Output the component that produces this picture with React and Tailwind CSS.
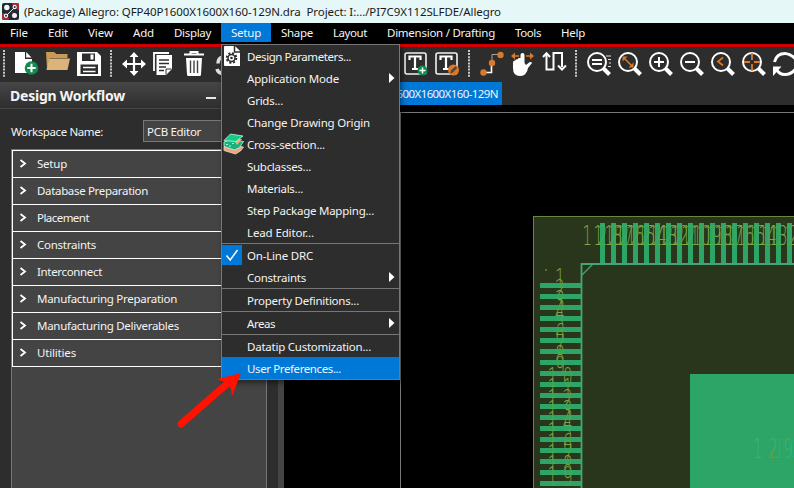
import { useLayoutEffect, useRef } from "react";

// Text set to an exact width by spreading the spacing between its letters.
function Fit({ w, children, className = "" }) {
  const ref = useRef(null);
  useLayoutEffect(() => {
    const el = ref.current;
    el.style.letterSpacing = "0px";
    const natural = el.getBoundingClientRect().width;
    el.style.letterSpacing = `${(w - natural) / children.length}px`;
  }, [w, children]);
  return (
    <span className="block shrink-0" style={{ width: w }}>
      <span ref={ref} className={`inline-block whitespace-pre ${className}`}>
        {children}
      </span>
    </span>
  );
}

const MENUS = [
  ["File", 18], ["Edit", 20], ["View", 25], ["Add", 21], ["Display", 37], ["Setup", 30],
  ["Shape", 32], ["Layout", 34], ["Dimension / Drafting", 108], ["Tools", 26], ["Help", 24],
];

const WORKFLOW = [
  ["Setup", 30], ["Database Preparation", 111], ["Placement", 52], ["Constraints", 59],
  ["Interconnect", 65], ["Manufacturing Preparation", 140], ["Manufacturing Deliverables", 142],
  ["Utilities", 39],
];

const SETUP_MENU = [
  { label: "Design Parameters...", w: 104, icon: "params" },
  { label: "Application Mode", w: 92, sub: true },
  { label: "Grids...", w: 36 },
  { label: "Change Drawing Origin", w: 123 },
  { label: "Cross-section...", w: 78, icon: "layers" },
  { label: "Subclasses...", w: 64 },
  { label: "Materials...", w: 56 },
  { label: "Step Package Mapping...", w: 127 },
  { label: "Lead Editor...", w: 67 },
  null,
  { label: "On-Line DRC", w: 66, icon: "check" },
  { label: "Constraints", w: 59, sub: true },
  null,
  { label: "Property Definitions...", w: 112 },
  null,
  { label: "Areas", w: 28, sub: true },
  null,
  { label: "Datatip Customization...", w: 124 },
  { label: "User Preferences...", w: 94, active: true },
];

function Logo() {
  return (
    <svg width="17" height="17" viewBox="0 0 17 17" className="shrink-0">
      <rect width="17" height="17" rx="2" fill="#202a35" />
      <path d="M10 1h6v6M1 10v6h6M10.500 9.500l2 2" stroke="#d9232e" strokeWidth="1.5" fill="none" />
      <path d="M5 12L12 5" stroke="#e9e9e9" strokeWidth="1" />
      <g fill="#f5f5f5">
        <circle cx="4.8" cy="4.5" r="2.7" />
        <circle cx="12.5" cy="12.5" r="2.5" />
      </g>
      <g fill="#202a35" stroke="#f5f5f5" strokeWidth="1.2">
        <circle cx="12.7" cy="4" r="1.600" />
        <circle cx="4" cy="12.8" r="1.600" />
      </g>
    </svg>
  );
}

// Toolbar cell; its drawing uses the window's own coordinates.
function Cell({ x, to, children }) {
  return (
    <svg className="shrink-0" width={to - x} height="35" viewBox={`${x} 47 ${to - x} 35`}>
      {children}
    </svg>
  );
}

function Grip({ x }) {
  return <path d={`M${x} 50v27`} stroke="#c8c8c8" strokeWidth="2" strokeDasharray="2 1.1" />;
}

function Lens({ cx, children }) {
  return (
    <g fill="none" stroke="#fff" strokeWidth="2">
      <circle cx={cx} cy="62" r="9" />
      <path d={`M${cx + 6.5} 68.500l6 6`} strokeWidth="4" />
      {children}
    </g>
  );
}

function TextBox({ x, children }) {
  return (
    <g>
      <rect x={x} y="53" width="21" height="21" rx="2" fill="none" stroke="#f2f2f2" strokeWidth="1.6" />
      <path d={`M${x + 4.5} 60v-3.5h11v3.5M${x + 10} 56.5v12.5M${x + 7} 69h6`} fill="none" stroke="#fff" strokeWidth="2.2" />
      {children}
    </g>
  );
}

function Toolbar() {
  return (
    <div className="flex h-[35px] w-[794px] shrink-0 overflow-hidden bg-[#2d2d2d]">
      <Cell x={0} to={10}><Grip x={4} /></Cell>
      <Cell x={10} to={42}>
        <path d="M15 52h10v7h7v14H15z" fill="#fff" />
        <path d="M26.2 52l5.3 5.6h-5.3z" fill="#fff" />
        <circle cx="31.5" cy="68" r="6.8" fill="#128a4e" />
        <path d="M31.5 63.8v8.4M27.3 68h8.4" stroke="#fff" strokeWidth="2" />
      </Cell>
      <Cell x={42} to={74}>
        <path d="M46 52h8l2.500 2h11v4H49.500L47 69z" fill="#c99955" />
        <path d="M49 58.500h21l-2.500 11.500H46.500z" fill="#dcb47a" />
      </Cell>
      <Cell x={74} to={106}>
        <path d="M77 52h20l4 4v20H77z" fill="#fff" />
        <rect x="82" y="53.500" width="13" height="7.500" fill="#2d2d2d" />
        <rect x="90.500" y="54.500" width="3" height="5" fill="#fff" />
        <rect x="80.500" y="64.500" width="17.500" height="9.500" fill="#2d2d2d" />
        <path d="M83 67.500h12.500M83 71.500h12.500" stroke="#fff" strokeWidth="1.600" />
      </Cell>
      <Cell x={106} to={118}><Grip x={111} /></Cell>
      <Cell x={118} to={149}>
        <path d="M134 55v18M125 64h18" stroke="#fff" strokeWidth="2.200" />
        <path d="M134 52l4.500 5h-9zM134 76l4.500-5h-9zM122 64l5-4.500v9zM146 64l-5-4.500v9z" fill="#fff" />
      </Cell>
      <Cell x={149} to={180}>
        <path d="M154 71V53h15" fill="none" stroke="#fff" strokeWidth="1.800" />
        <path d="M156.500 55h15.500v14l-6 6h-9.500z" fill="#fff" />
        <path d="M159 60h10M159 63.500h10M159 67h7M159 70.500h5" stroke="#2d2d2d" strokeWidth="1.400" />
        <path d="M166 74.500V69h5.500" stroke="#2d2d2d" fill="none" />
      </Cell>
      <Cell x={180} to={211}>
        <path d="M184 54.500h20M190.500 54v-2h7v2" fill="none" stroke="#fff" strokeWidth="2" />
        <path d="M186 58h16l-1 16.500q0 1.500-1.500 1.500h-11q-1.500 0-1.500-1.500z" fill="#fff" />
        <path d="M190.500 60.500v12.500M194 60.500v12.500M197.500 60.500v12.500" stroke="#444" strokeWidth="1.400" />
      </Cell>
      <Cell x={211} to={400}>
        <path d="M223 57q-5 1-5 6.500M217 69q1 4 7 5" fill="none" stroke="#e2e2e2" strokeWidth="3.500" />
      </Cell>
      <Cell x={400} to={431}>
        <TextBox x={405}>
          <circle cx="422.500" cy="70.500" r="5" fill="#128a4e" />
          <path d="M422.500 67.500v6M419.500 70.500h6" stroke="#fff" strokeWidth="1.500" />
        </TextBox>
      </Cell>
      <Cell x={431} to={464}>
        <TextBox x={436}>
          <circle cx="453.500" cy="70" r="5.500" fill="#d9792a" />
          <path d="M450 73.500l1-3 4.500-4.200 1.700 1.700-4.200 4.500z" fill="#5a4634" />
        </TextBox>
      </Cell>
      <Cell x={464} to={474}><Grip x={469} /></Cell>
      <Cell x={474} to={507}>
        <path d="M483 72.500h8.500V63.500" fill="none" stroke="#fff" strokeWidth="1.600" />
        <path d="M492 61v-6.500h8" fill="none" stroke="#a5a5a5" strokeWidth="1" />
        <g fill="#d9792a">
          <circle cx="483.500" cy="72.500" r="3.200" />
          <circle cx="492" cy="63" r="3.200" />
          <circle cx="500.500" cy="55" r="3.200" />
        </g>
      </Cell>
      <Cell x={507} to={538}>
        <path d="M512 56h7M526 56h7" stroke="#d9792a" strokeWidth="1.600" />
        <path d="M511 56l4-3.500v7zM534 56l-4-3.500v7z" fill="#d9792a" />
        <path d="M520.500 55q0-2 2-2t2 2v8l1.500 2 3-2.500q2.500-1 3 .5l-4 5q-.5 3-2 5-1.500 3-6 3-7 0-7-8v-5.500q0-2 2.200-2 .3-1.500 2.800-1.200v-.8q.5-.8 2.500-.5z" fill="#fff" />
      </Cell>
      <Cell x={538} to={570}>
        <path d="M546.500 55v14.500h7V53h8.500v14" fill="none" stroke="#fff" strokeWidth="2" />
        <path d="M543 57l3.500-3.800 3.500 3.800M558 65.500l4 4 4-4" fill="none" stroke="#fff" strokeWidth="2" />
      </Cell>
      <Cell x={570} to={583}><Grip x={576} /></Cell>
      <Cell x={583} to={614}>
        <path d="M606 56h5M608 59.500h3M609 63h2M608 66.500h3" stroke="#ddd" strokeWidth="1" />
        <Lens cx={597}><path d="M592 60h10M592 64h10" /></Lens>
      </Cell>
      <Cell x={614} to={645}>
        <Lens cx={628}>
          <path d="M624.500 58.500l7 7" stroke="#d9792a" strokeWidth="1.600" />
          <path d="M622.500 56.500h5l-5 5zM633.500 67.500h-5l5-5z" fill="#d9792a" stroke="none" />
        </Lens>
      </Cell>
      <Cell x={645} to={676}><Lens cx={659}><path d="M654 62h10M659 57v10" /></Lens></Cell>
      <Cell x={676} to={707}><Lens cx={690}><path d="M685 62h10" /></Lens></Cell>
      <Cell x={707} to={738}>
        <Lens cx={721}><path d="M723 57.500l-5 4 5 4" stroke="#d9792a" strokeWidth="1.700" /></Lens>
      </Cell>
      <Cell x={738} to={769}>
        <Lens cx={752}>
          <path d="M752 53v7M752 64v7M744 62h6M754 62h6" stroke="#d9792a" strokeWidth="1.800" />
        </Lens>
      </Cell>
      <Cell x={769} to={794}>
        <g fill="none" stroke="#fff" strokeWidth="3">
          <path d="M774.500 62q2-8.500 10.500-8.500 5 0 10 5" />
          <path d="M776 69q3 5.500 9 5.500 6 0 10-5" />
        </g>
        <path d="M773 66.500h8.500L773 76z" fill="#fff" />
      </Cell>
    </div>
  );
}

function MenuIcon({ kind }) {
  if (kind === "check")
    return (
      <svg width="20" height="20" viewBox="0 0 20 20" className="bg-[#0078d7]">
        <path d="M4.500 10.500l3.700 4.500L15.500 5" fill="none" stroke="#fff" strokeWidth="1.500" />
      </svg>
    );
  if (kind === "params")
    return (
      <svg width="20" height="22" viewBox="0 0 20 22">
        <path d="M3 1h10l5 5v15H3Q2 21 2 20V2Q2 1 3 1z" fill="#fff" />
        <path d="M12.500 1v6H18" fill="none" stroke="#2d2d2d" strokeWidth="1.500" />
        <circle cx="9.500" cy="13" r="4.800" fill="none" stroke="#2d2d2d" strokeWidth="2" strokeDasharray="2 1.770" />
        <circle cx="9.500" cy="13" r="3.500" fill="none" stroke="#2d2d2d" strokeWidth="1.500" />
        <circle cx="9.500" cy="13" r="1.300" fill="#2d2d2d" />
      </svg>
    );
  if (kind === "layers")
    return (
      <svg width="22" height="22" viewBox="0 0 22 22">
        <path d="M2 14l6-2 13.500 2-3 4-5 3L2 17.500z" fill="#eda57c" stroke="#e8d8c8" strokeWidth=".8" />
        <path d="M2 9l6-2 13.500 1.500-4 6-5 2.500L2 13.500z" fill="#14b47c" stroke="#d8eee4" strokeWidth=".8" />
        <path d="M13 9l4-3.500 3 .5-5 6z" fill="#f1ad82" />
        <path d="M2 7.500L8.500 1 21 3l-7 5.500z" fill="#0fcf88" stroke="#c9f0df" strokeWidth=".8" />
        <path d="M4 11.500h2m1 1.500h2m1-2.500h2" stroke="#baf0d8" />
      </svg>
    );
  return null;
}

function SetupMenu() {
  return (
    <div className="absolute left-[221px] top-[44px] flex w-[179px] flex-col border border-[#777] bg-[#2d2d2d] shadow-[2px_3px_5px_rgba(0,0,0,0.45)]">
      {SETUP_MENU.map((item, i) =>
        item === null ? (
          <div key={i} className="h-px bg-[#777]" />
        ) : (
          <div key={i} className={`flex h-[22px] items-center ${item.active ? "bg-[#0078d7]" : ""}`}>
            <div className="w-[25px] shrink-0"><MenuIcon kind={item.icon} /></div>
            <div className="pt-[2px]"><Fit w={item.w}>{item.label}</Fit></div>
            {item.sub && (
              <svg width="6" height="10" viewBox="0 0 6 10" className="ml-auto mr-[4px]">
                <path d="M0 0l5.500 5L0 10z" fill="#fff" />
              </svg>
            )}
          </div>
        )
      )}
    </div>
  );
}

function LeftPanel() {
  return (
    <div className="flex h-[406px] w-[278px] shrink-0 flex-col bg-[#2d2d2d]">
      <div className="flex h-[27px] shrink-0 items-center border-b border-[#464646] bg-linear-to-b from-[#464646] to-[#2e2e2e] pl-[10px] pt-[2px] text-[14px] font-bold">
        <Fit w={115}>Design Workflow</Fit>
        <div className="ml-[81px] mt-1 h-[2px] w-[10px] bg-[#e8e8e8]" />
      </div>
      <div className="flex h-[40px] shrink-0 items-start pl-[11px] pt-[11px]">
        <div className="flex h-[22px] w-[132px] items-center pt-[2px]"><Fit w={92}>Workspace Name:</Fit></div>
        <div className="flex h-[22px] w-[123px] items-center border border-[#777] bg-[#444] pl-[3px] pt-[2px]">
          <Fit w={54}>PCB Editor</Fit>
        </div>
      </div>
      <div className="ml-[11px] flex w-[256px] grow flex-col border border-b-0 border-[#777] bg-[#444]">
        <div className="flex flex-col border-l border-t border-white">
          {WORKFLOW.map(([label, w]) => (
            <div key={label} className="flex h-[27px] items-center border-b border-white">
              <svg width="24" height="12" viewBox="0 0 24 12">
                <path d="M7.500 2l4.500 3.500L7.500 9" fill="none" stroke="#fff" strokeWidth="1.800" />
              </svg>
              <Fit w={w}>{label}</Fit>
            </div>
          ))}
        </div>
      </div>
    </div>
  );
}

const TOP_PADS = Array.from({ length: 18 }, (_, i) => i);
const LEFT_PADS = Array.from({ length: 19 }, (_, i) => i);

// One pin number, its digits about 15 px apart around the pad's centre.
function PinNumber({ n, cx, y, fill = "#77a844" }) {
  const digits = String(n).split("");
  return digits.map((d, i) => (
    <text
      key={i}
      transform={`translate(${cx + (i - (digits.length - 1) / 2) * 15.3} ${y}) scale(0.6 1)`}
      textAnchor="middle"
      fill={fill}
      className="font-['DejaVu_Sans'] text-[26px] font-extralight"
    >
      {d}
    </text>
  ));
}

function Board() {
  return (
    <svg width="393" height="375" viewBox="401 113 393 375" className="block shrink-0">
      <rect x="533.500" y="216.500" width="300" height="300" fill="#29361b" stroke="#65893a" />
      {TOP_PADS.map((i) => (
        <rect key={i} x={600 + 11 * i} y="223" width="5" height="41" fill="#2ca567" />
      ))}
      {LEFT_PADS.map((i) => (
        <rect key={i} x="540" y={283 + 11 * i} width="41" height="5" fill="#2ca567" />
      ))}
      <g>
        {TOP_PADS.map((i) => <PinNumber key={i} n={128 - i} cx={602.5 + 11 * i} y={245} />)}
        {LEFT_PADS.map((i) => <PinNumber key={i} n={i + 1} cx={560} y={288 + 11 * i} />)}
      </g>
      <g opacity="0.55" fill="#2ca567">
        {TOP_PADS.map((i) => <rect key={i} x={600 + 11 * i} y="223" width="5" height="41" />)}
        {LEFT_PADS.map((i) => <rect key={i} x="540" y={283 + 11 * i} width="41" height="5" />)}
      </g>
      <rect x="545" y="269" width="2" height="2" fill="#55762f" />
      <path d="M794 264H581.500V488" fill="none" stroke="#45a578" strokeWidth="1.800" />
      <path d="M581.500 275.500l11-11" stroke="#45a578" strokeWidth="1.300" />
      <rect x="690" y="374" width="104" height="114" fill="#2ca567" />
      <PinNumber n={129} cx={773} y={458} fill="#43b36b" />
      <path d="M777 439.500h5M779.500 439v18M777 457.500h5M794 440q-4 5-4 10t4 7" fill="none" stroke="#13b58c" />
      <path d="M770 457.500h6M772.500 452v9" stroke="#609b49" />
    </svg>
  );
}

export default function App() {
  return (
    <div className="relative flex h-[488px] w-[794px] flex-col overflow-hidden bg-black font-['Noto_Sans','Open_Sans',sans-serif] text-[11.5px] leading-[16px] text-[#f4f4f4]">
      <div className="flex h-[23px] shrink-0 items-center bg-[#e5f7f7] pl-[2px] text-[#1a1a1a]">
        <Logo />
        <div className="ml-[5px] pt-px"><Fit w={477}>{"(Package) Allegro: QFP40P1600X1600X160-129N.dra  Project: I:.../PI7C9X112SLFDE/Allegro"}</Fit></div>
      </div>
      <div className="flex h-[21px] shrink-0 bg-black">
        {MENUS.map(([label, w]) => (
          <div key={label} className={`flex h-[19px] items-center px-[10px] pt-px ${label === "Setup" ? "bg-[#0078d7]" : ""}`}>
            <Fit w={w}>{label}</Fit>
          </div>
        ))}
      </div>
      <div className="h-[3px] shrink-0 bg-[#d00000]" />
      <Toolbar />
      <div className="flex h-[406px] shrink-0">
        <LeftPanel />
        <div className="w-[6px] shrink-0 bg-[#444]" />
        <div className="flex w-[510px] shrink-0 flex-col">
          <div className="flex h-[23px] shrink-0 bg-[#2d2d2d]">
            <div className="flex w-[218px] items-center justify-end bg-[#0078d7] pr-[4px] pt-px">
              <Fit w={146}>QFP40P1600X1600X160-129N</Fit>
            </div>
          </div>
          <div className="ml-[116px] mt-[7px] flex grow border-l border-t border-[#777]">
            <Board />
          </div>
        </div>
      </div>
      <SetupMenu />
      <svg className="absolute left-[170px] top-[365px]" width="80" height="65" viewBox="170 365 80 65">
        <path d="M181 424L228 383" stroke="#ff1200" strokeWidth="7" strokeLinecap="round" />
        <path d="M241 373l-24 6 9 4 5 5.500 1 8z" fill="#ff1200" />
      </svg>
    </div>
  );
}
